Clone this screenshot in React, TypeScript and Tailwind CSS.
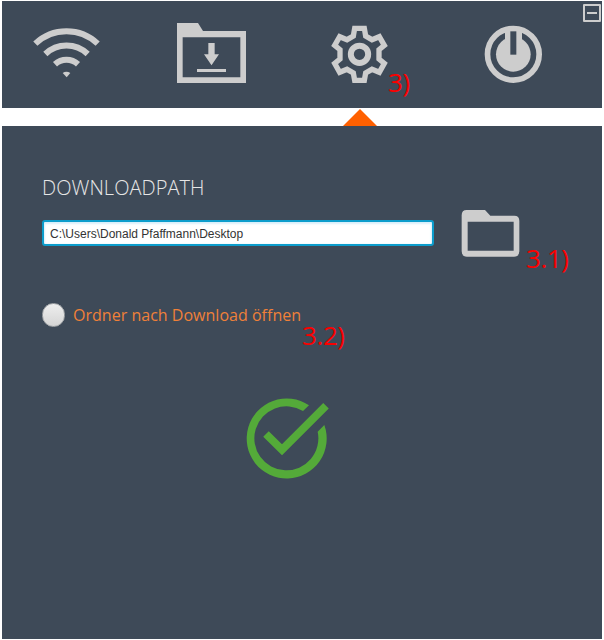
import React, { useState } from "react";

function WifiIcon() {
  return (
    <svg className="h-[90px] w-[100px]" viewBox="0 0 300 270" fill="none" stroke="#cdcdcd" strokeWidth="18">
      <path d="M46 101A136 136 0 0 1 233 101" />
      <path d="M76 132A92 92 0 0 1 203 132" />
      <path d="M105 163A51 51 0 0 1 174 163" />
      <path d="M128 189Q139 182 151 189L140 202Z" fill="#cdcdcd" stroke="none" />
    </svg>
  );
}

function DownloadFolderIcon() {
  return (
    <svg className="h-[90px] w-[100px]" viewBox="0 0 300 270" fill="#cdcdcd">
      <path fillRule="evenodd" d="M36 39H99L114 63H243V219H36ZM53 82V202H226V82Z" />
      <path d="M130 99H149V133H162L139.500 166L117 133H130ZM96 177H183V186H96Z" />
    </svg>
  );
}

function GearIcon() {
  return (
    <svg className="h-[90px] w-[100px]" viewBox="0 0 300 270" fill="none" stroke="#cdcdcd">
      <path
        strokeWidth="16"
        d="M104 55H133L137 78L156 89L178 80L193 106L177 119V147L193 160L178 187L156 178L137 189L133 211H104L100 189L81 178L59 187L44 160L60 147V119L44 106L59 80L81 89L100 78Z"
      />
      <circle cx="118.500" cy="133" r="26" strokeWidth="18" />
    </svg>
  );
}

function PowerIcon() {
  return (
    <svg className="h-[90px] w-[100px]" viewBox="0 0 300 270">
      <circle cx="130" cy="133" r="77.500" fill="none" stroke="#cdcdcd" strokeWidth="17" />
      <circle cx="130" cy="133" r="52" fill="#cdcdcd" />
      <path d="M105 60H156V100H105Z" fill="#cdcdcd" />
      <path d="M121 64H139V134H121Z" fill="#3e4a58" />
    </svg>
  );
}

function FolderIcon() {
  return (
    <svg className="h-[48px] w-[60px]" viewBox="183 42 180 144" fill="#cdcdcd">
      <path
        fillRule="evenodd"
        d="M200 45H255L271 62H343Q358 62 358 78V169Q358 185 342 185H201Q185 185 185 169V61Q185 45 200 45ZM203 80V167H341V80Z"
      />
    </svg>
  );
}

function CheckIcon() {
  return (
    <svg className="h-[105px] w-[110px]" viewBox="0 0 330 315">
      <path d="M222 61A120 120 0 1 0 268 120L248 140A96 96 0 1 1 204 78Z" fill="#54aa39" />
      <path d="M93 147L141 194.500L273 62.500" fill="none" stroke="#54aa39" strokeWidth="23.500" />
    </svg>
  );
}

function Note({ children, className }: { children: string; className: string }) {
  return (
    <span className={`absolute whitespace-nowrap font-['Open_Sans','Noto_Sans',sans-serif] text-[26px] leading-[36px] tracking-[-0.4px] text-[#fb0000] ${className}`}>
      {children}
    </span>
  );
}

export default function App() {
  const [path, setPath] = useState("C:\\Users\\Donald Pfaffmann\\Desktop");

  return (
    <div className="relative h-[640px] w-[604px] bg-white px-[2px] pt-px font-['Open_Sans','Noto_Sans',sans-serif]">
      <header className="flex h-[107px] w-[600px] items-start bg-[#3e4a58]">
        <button className="mt-[9px] ml-[18px]" aria-label="WLAN"><WifiIcon /></button>
        <button className="mt-[9px] ml-[45px]" aria-label="Download"><DownloadFolderIcon /></button>
        <button className="mt-[9px] ml-[55px]" aria-label="Einstellungen"><GearIcon /></button>
        <button className="mt-[9px] ml-[50px]" aria-label="Beenden"><PowerIcon /></button>
        <button className="mt-[3px] ml-[13px] flex size-[18px] shrink-0 items-center justify-center rounded-[1px] border-2 border-[#cdcdcd]" aria-label="Minimieren">
          <span className="h-[2px] w-[10px] bg-[#cdcdcd]" />
        </button>
      </header>

      <div className="h-[18px] pl-[341px]">
        <svg className="h-[18px] w-[34px]" viewBox="0 0 34 18">
          <path d="M17 1L34 18H0Z" fill="#ff6000" />
        </svg>
      </div>

      <main className="flex h-[513px] w-[600px] flex-col bg-[#3e4a58] pl-[40px]">
        <h1 className="mt-[48px] h-[28px] text-[20px] leading-[28px] font-light tracking-[0.05px] text-[#e6e6e6]">DOWNLOADPATH</h1>
        <div className="mt-[7px] flex h-[48px] items-center">
          <input
            className="h-[26px] w-[392px] rounded-[3px] border-2 border-[#0c9dcc] bg-white pt-[2px] pl-[6px] font-['Liberation_Sans',sans-serif] text-[12px] text-[#333333] shadow-[inset_0_1px_2px_1px_#d9effa] outline-none"
            value={path}
            onChange={(e) => setPath(e.target.value)}
          />
          <button className="ml-[27px]" aria-label="Ordner"><FolderIcon /></button>
        </div>
        <label className="mt-[45px] flex h-[26px] items-center gap-[8px]">
          <span className="h-[24px] w-[23px] rounded-full border border-[#a8abad] bg-linear-to-b from-[#eeeeee] to-[#d5d5d5]" />
          <span className="text-[16px] leading-[24px] tracking-[0.02px] text-[#f08038]">Ordner nach Download öffnen</span>
        </label>
        <div className="mt-[57px] ml-[193px]"><CheckIcon /></div>
      </main>

      <Note className="top-[64px] left-[388px]">3)</Note>
      <Note className="top-[240px] left-[526px]">3.1)</Note>
      <Note className="top-[317px] left-[302px]">3.2)</Note>
    </div>
  );
}
